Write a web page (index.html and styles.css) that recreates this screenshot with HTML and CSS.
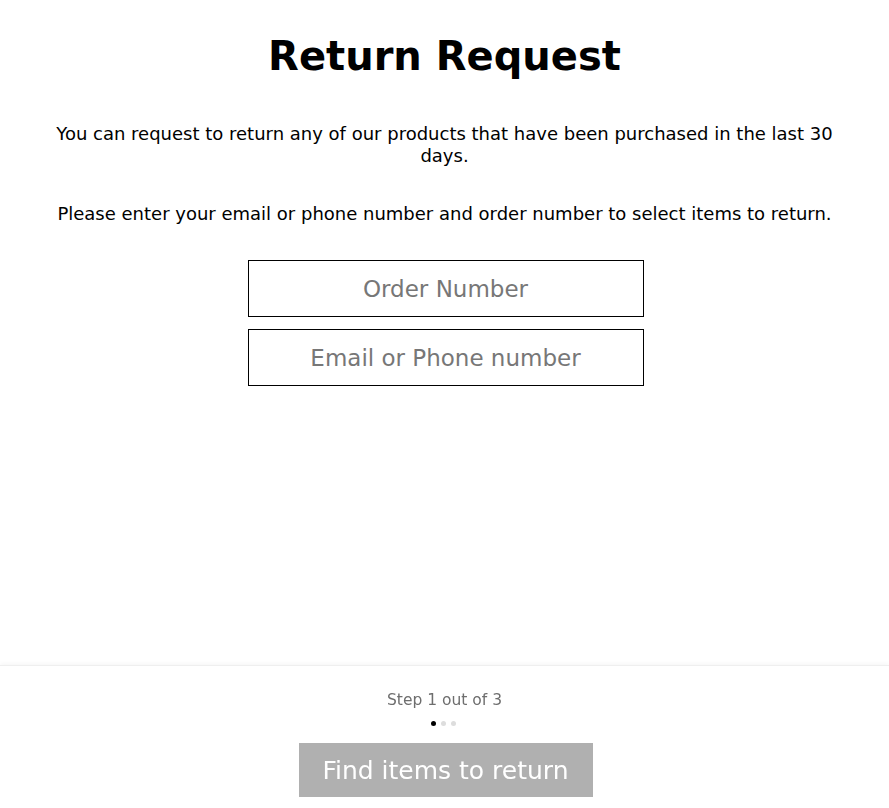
FILE: index.html
```html
<!DOCTYPE html>
<html lang="en">
<head>
  <meta charset="UTF-8" />
  <meta name="viewport" content="width=device-width, initial-scale=1.0"/>
  <title>Return Request</title>
  <link rel="stylesheet" href="styles.css">
</head>
<body>
  <main class="return-page">
    <h1 class="page-title">Return Request</h1>
    <p class="intro">You can request to return any of our products that have been purchased in the last 30 days.</p>
    <p class="intro">Please enter your email or phone number and order number to select items to return.</p>

    <form class="lookup-form" id="lookupForm">
      <input type="text" class="field" placeholder="Order Number">
      <input type="text" class="field" placeholder="Email or Phone number">
    </form>
  </main>

  <footer class="step-bar">
    <div class="step-label">Step 1 out of 3</div>
    <div class="step-dots">
      <span class="dot active"></span>
      <span class="dot"></span>
      <span class="dot"></span>
    </div>
    <button type="submit" form="lookupForm" class="find-btn" disabled>Find items to return</button>
  </footer>
</body>
</html>
```

FILE: styles.css
```css
:root {
  --texto: #000;
  --cinza: #6e6e6e;
  --borda: #000;
  --botao: #b0b0b0;
}

* {
  box-sizing: border-box;
}

body {
  margin: 0;
  font-family: 'DejaVu Sans', 'Open Sans', sans-serif;
  color: var(--texto);
  background: #fff;
}

.return-page {
  max-width: 790px;
  margin: 0 auto;
  padding: 29px 0 0;
  text-align: center;
}

.page-title {
  margin: 0 0 40px;
  font-size: 40px;
  font-weight: bold;
  line-height: 54px;
}

.intro {
  margin: 0 0 36px;
  font-size: 18px;
  line-height: 22px;
}

.lookup-form {
  display: flex;
  flex-direction: column;
  align-items: center;
  gap: 12px;
  margin-top: -1px;
}

.field {
  width: 396px;
  height: 57px;
  margin-left: 2px;
  border: 1px solid var(--borda);
  border-radius: 0;
  font-family: inherit;
  font-size: 23px;
  text-align: center;
  color: #000;
  outline: none;
}

.field::placeholder {
  color: #777;
}

.step-bar {
  position: fixed;
  left: 0;
  right: 0;
  bottom: 0;
  height: 143px;
  padding-top: 24px;
  background: #fff;
  border-top: 1px solid #efefef;
  box-shadow: 0 -2px 4px rgba(0, 0, 0, 0.03);
  display: flex;
  flex-direction: column;
  align-items: center;
}

.step-label {
  font-size: 15.5px;
  line-height: 20px;
  color: var(--cinza);
}

.step-dots {
  display: flex;
  gap: 5px;
  margin-top: 11px;
  margin-left: -3px;
}

.dot {
  width: 5px;
  height: 5px;
  border-radius: 50%;
  background: #ddd;
}

.dot.active {
  background: #000;
}

.find-btn {
  margin-top: 17px;
  margin-left: 2px;
  width: 294px;
  height: 54px;
  border: none;
  background: var(--botao);
  color: #fff;
  font-family: inherit;
  font-size: 25px;
  cursor: not-allowed;
}
```
